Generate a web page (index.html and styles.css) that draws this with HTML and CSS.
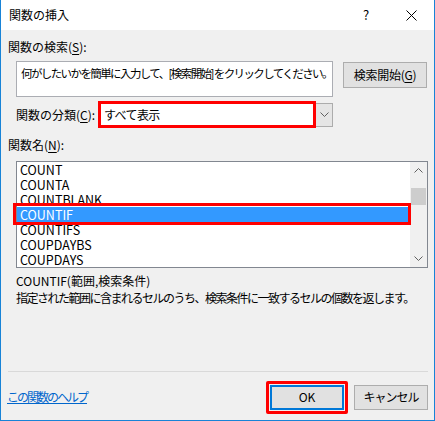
FILE: index.html
```html
<!DOCTYPE html>
<html lang="ja">
<head>
    <meta charset="UTF-8">
    <title>関数の挿入</title>
    <link rel="stylesheet" href="styles.css">
</head>
<body>
    <div class="window">
        <div class="titlebar">
            <span class="title">関数の挿入</span>
            <span class="help">?</span>
            <span class="close">
                <svg width="11" height="11" viewBox="0 0 11 11"><path d="M0.5 0.5 L10.5 10.5 M10.5 0.5 L0.5 10.5" stroke="#000" stroke-width="1" fill="none"/></svg>
            </span>
        </div>
        <div class="content">
            <div class="label">関数の検索(<u>S</u>):</div>
            <div class="search-row">
                <div class="search-box">何がしたいかを簡単に入力して、[検索開始] をクリックしてください。</div>
                <div class="btn search-btn">検索開始(<u>G</u>)</div>
            </div>
            <div class="category-row">
                <span class="cat-label">関数の分類(<u>C</u>):</span>
                <div class="combo">
                    <div class="combo-field">すべて表示</div>
                    <div class="combo-arrow">
                        <svg width="9" height="5" viewBox="0 0 9 5"><path d="M0.5 0.5 L4.5 4.5 L8.5 0.5" stroke="#606060" fill="none"/></svg>
                    </div>
                </div>
            </div>
            <div class="label name-label">関数名(<u>N</u>):</div>
            <div class="listbox">
                <div class="items">
                    <div class="item">COUNT</div>
                    <div class="item">COUNTA</div>
                    <div class="item">COUNTBLANK</div>
                    <div class="item selected">COUNTIF</div>
                    <div class="item">COUNTIFS</div>
                    <div class="item">COUPDAYBS</div>
                    <div class="item">COUPDAYS</div>
                </div>
                <div class="scrollbar">
                    <div class="arrow">
                        <svg width="9" height="5" viewBox="0 0 9 5"><path d="M0.5 4.5 L4.5 0.5 L8.5 4.5" stroke="#606060" fill="none"/></svg>
                    </div>
                    <div class="track"><div class="thumb"></div></div>
                    <div class="arrow">
                        <svg width="9" height="5" viewBox="0 0 9 5"><path d="M0.5 0.5 L4.5 4.5 L8.5 0.5" stroke="#606060" fill="none"/></svg>
                    </div>
                </div>
            </div>
            <div class="syntax">COUNTIF(範囲,検索条件)</div>
            <div class="desc">指定された範囲に含まれるセルのうち、検索条件に一致するセルの個数を返します。</div>
        </div>
        <div class="separator"></div>
        <div class="footer">
            <a class="help-link" href="#">この関数のヘルプ</a>
            <div class="ok-wrap"><div class="btn ok-btn">OK</div></div>
            <div class="btn cancel-btn">キャンセル</div>
        </div>
    </div>
</body>
</html>
```

FILE: styles.css
```css
body {
    margin: 0;
    padding: 0;
    background: #ffffff;
}

.window {
    width: 435px;
    height: 421px;
    box-sizing: border-box;
    border: 1px solid #1883d7;
    border-top: none;
    background-color: #f0f0f0;
    display: flex;
    flex-direction: column;
    font-family: "Noto Sans CJK JP", sans-serif;
    font-size: 12px;
    line-height: 16px;
    color: #000000;
}

u {
    text-decoration: underline;
    text-underline-offset: 2px;
}

/* title bar */
.titlebar {
    height: 30px;
    background-color: #ffffff;
    display: flex;
    align-items: center;
    padding-left: 8px;
}

.title {
    flex: 1;
}

.help {
    width: 44px;
    text-align: center;
    font-size: 13px;
}

.close {
    width: 46px;
    display: flex;
    justify-content: center;
}

/* main area */
.content {
    padding: 9px 7px 0 7px;
}

.search-row {
    display: flex;
    align-items: flex-start;
    margin-top: 6px;
    margin-left: 8px;
}

.search-box {
    width: 317px;
    height: 36px;
    box-sizing: border-box;
    background: #ffffff;
    border: 1px solid #abadb3;
    padding: 3px 4px;
    white-space: nowrap;
    overflow: hidden;
    font-size: 11.5px;
    letter-spacing: -1.6px;
}

.btn {
    box-sizing: border-box;
    background-color: #e1e1e1;
    border: 1px solid #adadad;
    display: flex;
    align-items: center;
    justify-content: center;
}

.search-btn {
    width: 84px;
    height: 26px;
    margin-left: 10px;
    margin-top: 1px;
    letter-spacing: -0.3px;
}

.category-row {
    display: flex;
    align-items: center;
    margin-top: 4px;
    margin-left: 8px;
}

.cat-label {
    width: 82px;
}

.combo {
    display: flex;
    align-items: center;
}

.combo-field {
    width: 218px;
    height: 27px;
    box-sizing: border-box;
    border: 3px solid #ff0000;
    background: #ffffff;
    padding-left: 3px;
    display: flex;
    align-items: center;
    letter-spacing: -0.6px;
}

.combo-arrow {
    width: 17px;
    height: 24px;
    box-sizing: border-box;
    background: #e5e5e5;
    border: 1px solid #acacac;
    border-left: none;
    display: flex;
    align-items: center;
    justify-content: center;
}

.name-label {
    margin-top: 9px;
}

.listbox {
    display: flex;
    width: 412px;
    height: 107px;
    box-sizing: border-box;
    margin-top: 8px;
    margin-left: 8px;
    border: 1px solid #828790;
    background: #ffffff;
}

.items {
    flex: 1;
}

.item {
    height: 15px;
    line-height: 15px;
    padding-left: 3px;
    font-size: 12.5px;
}

.item.selected {
    position: relative;
    background-color: #3399ff;
    color: #ffffff;
}

.item.selected::after {
    content: "";
    position: absolute;
    left: -4px;
    right: -1px;
    top: -4px;
    bottom: -3px;
    border: 3px solid #ff0000;
}

.scrollbar {
    width: 17px;
    background: #f0f0f0;
    display: flex;
    flex-direction: column;
}

.arrow {
    height: 17px;
    display: flex;
    align-items: center;
    justify-content: center;
}

.track {
    flex: 1;
    padding: 9px 1px 0 1px;
}

.thumb {
    height: 17px;
    background: #cdcdcd;
}

.syntax {
    margin-top: 5px;
    margin-left: 8px;
}

.desc {
    margin-left: 8px;
    margin-top: 1px;
    white-space: nowrap;
    letter-spacing: -1.5px;
}

.separator {
    margin: auto 6px 0 7px;
    height: 1px;
    background: #d9d9d9;
}

/* bottom buttons */
.footer {
    height: 48px;
    display: flex;
    align-items: center;
    padding: 2px 6px 0 6px;
    box-sizing: border-box;
}

.help-link {
    flex: 1;
    color: #0066cc;
    text-decoration: underline;
    letter-spacing: -2px;
}

.ok-wrap {
    border: 3px solid #ff0000;
    padding: 1px;
    border-radius: 2px;
}

.ok-btn {
    width: 74px;
    height: 25px;
    border: 2px solid #0078d7;
}

.cancel-btn {
    width: 74px;
    height: 25px;
    margin-left: 6px;
    letter-spacing: -1px;
}
```
